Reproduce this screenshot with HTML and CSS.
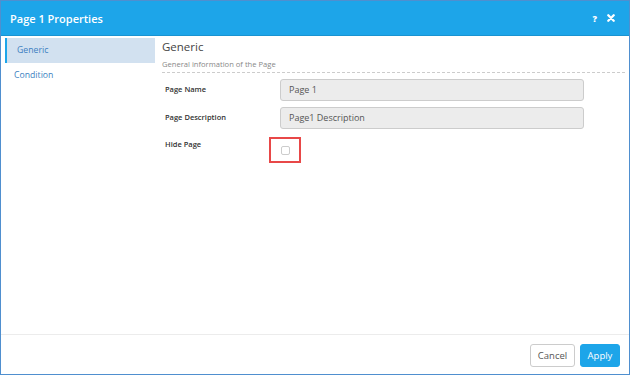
FILE: index.html
```html
<!DOCTYPE html>
<html lang="en">
<head>
  <meta charset="UTF-8">
  <title>Page 1 Properties</title>
  <link rel="stylesheet" href="styles.css">
</head>
<body>

<div class="dialog">
  <div class="dialog-header">
    <span class="dialog-title">Page 1 Properties</span>
    <div class="header-tools">
      <span class="tool-help">?</span>
      <svg class="tool-close" width="8" height="8" viewBox="0 0 8 8">
        <path d="M1.3 1.3 L6.7 6.7 M6.7 1.3 L1.3 6.7" stroke="#fff" stroke-width="2.3" stroke-linecap="round"/>
      </svg>
    </div>
  </div>

  <div class="dialog-body">
    <ul class="side-nav">
      <li class="nav-item active">Generic</li>
      <li class="nav-item">Condition</li>
    </ul>

    <div class="panel">
      <h4 class="panel-title">Generic</h4>
      <p class="panel-sub">General information of the Page</p>

      <div class="form-row">
        <label class="form-label">Page Name</label>
        <div class="form-input">Page 1</div>
      </div>
      <div class="form-row">
        <label class="form-label">Page Description</label>
        <div class="form-input">Page1 Description</div>
      </div>
      <div class="form-row check-row">
        <label class="form-label">Hide Page</label>
        <div class="check-mark">
          <span class="check-box"></span>
        </div>
      </div>
    </div>
  </div>

  <div class="dialog-footer">
    <button class="btn btn-cancel">Cancel</button>
    <button class="btn btn-apply">Apply</button>
  </div>
</div>

</body>
</html>
```

FILE: styles.css
```css
* {
  box-sizing: border-box;
}

body {
  margin: 0;
  font-family: 'Open Sans', 'Noto Sans', sans-serif;
  background: #fff;
}

.dialog {
  width: 630px;
  height: 375px;
  border: 1px solid #4f8fcf;
  display: flex;
  flex-direction: column;
  background: #fff;
}

.dialog-header {
  height: 35px;
  flex-shrink: 0;
  background: #1da5e9;
  border-bottom: 1px solid #1993d1;
  display: flex;
  align-items: center;
  justify-content: space-between;
  padding: 0 14px 0 9px;
  color: #fff;
}

.dialog-title {
  font-size: 11px;
  font-weight: 600;
}

.header-tools {
  display: flex;
  align-items: center;
  gap: 10px;
}

.tool-help {
  font-size: 9px;
  font-weight: 800;
}

.dialog-body {
  flex: 1;
  display: flex;
  padding-top: 2px;
}

.side-nav {
  list-style: none;
  margin: 0;
  padding: 0 0 0 4px;
  width: 154px;
  flex-shrink: 0;
}

.nav-item {
  height: 25px;
  line-height: 25px;
  font-size: 8.7px;
  color: #3d7fc1;
  padding-left: 9px;
}

.nav-item.active {
  background: #d2e1f0;
  border-left: 2px solid #1da5e9;
  padding-left: 10px;
  width: 150px;
}

.panel {
  flex: 1;
  padding: 0 4px 0 7px;
}

.panel-title {
  margin: 0;
  font-size: 11.5px;
  font-weight: 400;
  color: #444;
  line-height: 18px;
}

.panel-sub {
  margin: 0 0 6px;
  font-size: 7.6px;
  color: #888;
  line-height: 16px;
  border-bottom: 1px dashed #ccc;
}

.form-row {
  display: flex;
  align-items: center;
  height: 22px;
  margin-bottom: 6px;
  padding-left: 3px;
}

.form-label {
  width: 115px;
  font-size: 7.5px;
  font-weight: 600;
  color: #333;
  padding-bottom: 3px;
}

.form-input {
  width: 304px;
  height: 22px;
  line-height: 20px;
  background: #ececec;
  border: 1px solid #ccc;
  border-radius: 3px;
  padding-left: 8px;
  font-size: 9px;
  color: #555;
}

.check-row {
  align-items: flex-start;
  height: auto;
  margin-top: 8px;
}

.check-row .form-label {
  width: 104px;
  padding-top: 2px;
}

.check-mark {
  width: 32px;
  height: 26px;
  border: 2px solid #e84848;
  display: flex;
  align-items: center;
  justify-content: center;
}

.check-box {
  width: 9px;
  height: 9px;
  border: 1px solid #ccc;
  border-radius: 2px;
  background: #fff;
}

.dialog-footer {
  height: 40px;
  flex-shrink: 0;
  border-top: 1px solid #ececec;
  display: flex;
  justify-content: flex-end;
  align-items: flex-start;
  gap: 5px;
  padding: 9px 9px 0 0;
}

.btn {
  font-family: 'Open Sans', 'Noto Sans', sans-serif;
  font-size: 9.5px;
  height: 23px;
  border-radius: 3px;
  cursor: pointer;
  padding: 0;
}

.btn-cancel {
  background: #fff;
  border: 1px solid #ccc;
  color: #555;
  width: 45px;
}

.btn-apply {
  background: #1da5e9;
  border: 1px solid #1da5e9;
  color: #fff;
  width: 40px;
}
```
